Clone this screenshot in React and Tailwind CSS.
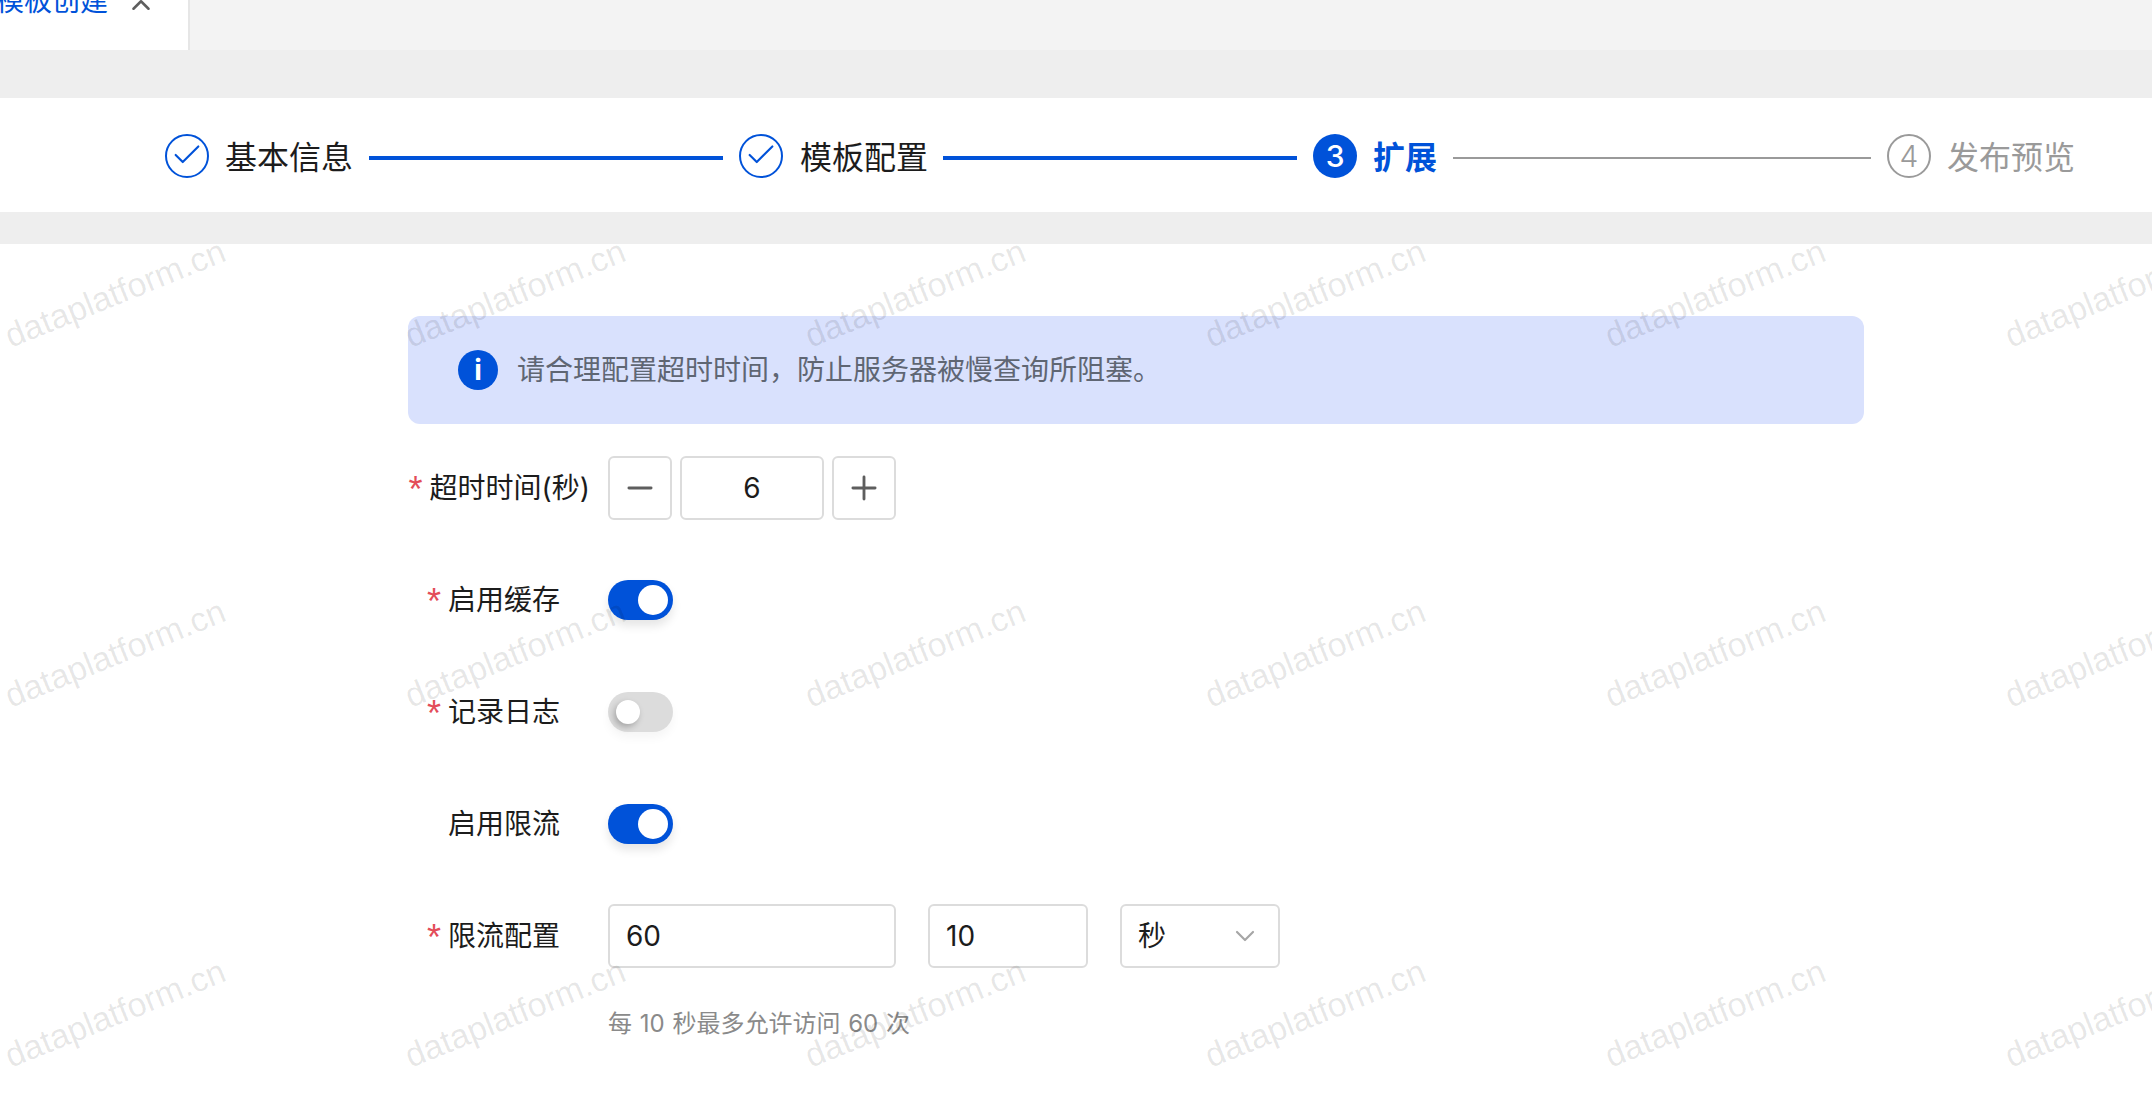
import { Check, ChevronDown, ChevronUp, Minus, Plus } from 'lucide-react'

const cjk = "font-['Inter','Noto_Sans_CJK_SC',sans-serif]"

function StepCircle({ status, number }) {
  if (status === 'done') {
    return (
      <span className="-mt-[2px] flex h-[44px] w-[44px] shrink-0 items-center justify-center rounded-full border-2 border-[#0052d9] text-[#0052d9]">
        <Check className="-mt-[2px] h-[34px] w-[34px]" strokeWidth={1.5} />
      </span>
    )
  }
  if (status === 'active') {
    return (
      <span className="-mt-[2px] flex h-[44px] w-[44px] shrink-0 items-center justify-center rounded-full bg-[#0052d9] text-[30px] font-medium text-white">
        {number}
      </span>
    )
  }
  return (
    <span className="-mt-[2px] flex h-[44px] w-[44px] shrink-0 items-center justify-center rounded-full border-2 border-[#9a9a9a] text-[30px] font-light text-[#9a9a9a]">
      {number}
    </span>
  )
}

function Steps() {
  return (
    <div className="flex h-[114px] items-center bg-white pl-[165px] pt-[4px]">
      <StepCircle status="done" />
      <span className="ml-[16px] mt-[2px] text-[32px] leading-[44px] text-[#1c1c1c]">基本信息</span>
      <div className="ml-[16px] mt-[2px] h-[4px] w-[354px] bg-[#0052d9]" />
      <div className="ml-[16px]">
        <StepCircle status="done" />
      </div>
      <span className="ml-[17px] mt-[2px] text-[32px] leading-[44px] text-[#1c1c1c]">模板配置</span>
      <div className="ml-[15px] mt-[2px] h-[4px] w-[354px] bg-[#0052d9]" />
      <div className="ml-[16px]">
        <StepCircle status="active" number={3} />
      </div>
      <span className="ml-[16px] mt-[2px] text-[32px] font-bold leading-[44px] text-[#0052d9]">扩展</span>
      <div className="ml-[16px] mt-[2px] h-[2px] w-[418px] bg-[#9a9a9a]" />
      <div className="ml-[16px]">
        <StepCircle status="todo" number={4} />
      </div>
      <span className="ml-[16px] mt-[2px] text-[32px] leading-[44px] text-[#9a9a9a]">发布预览</span>
    </div>
  )
}

function Row({ label, required, pad = 'pr-[48px]', className = '', children }) {
  return (
    <div className={`flex items-center ${className}`}>
      <label className={`flex w-[200px] shrink-0 items-center justify-end text-[28px] leading-[40px] text-[#1c1c1c] ${pad}`}>
        {required && <span className="mr-[7px] translate-y-[2px] font-['Liberation_Sans',sans-serif] text-[36px] leading-[40px] text-[#e34d59]">*</span>}
        {label}
      </label>
      {children}
    </div>
  )
}

function Toggle({ on }) {
  if (on) {
    return (
      <span className="flex h-[40px] w-[65px] items-center justify-end rounded-full bg-[#0052d9] pr-[5px] shadow-[0_6px_10px_rgba(0,0,0,0.1)]">
        <span className="h-[30px] w-[30px] rounded-full bg-white" />
      </span>
    )
  }
  return (
    <span className="flex h-[40px] w-[65px] items-center rounded-full bg-[#dcdcdc] pl-[8px] shadow-[0_6px_10px_rgba(0,0,0,0.04)]">
      <span className="h-[24px] w-[24px] rounded-full bg-white shadow-[-2px_3px_6px_rgba(0,0,0,0.25)]" />
    </span>
  )
}

function Field({ className = '', children }) {
  return (
    <div className={`flex h-[64px] items-center rounded-[6px] border-2 border-[#dcdcdc] bg-white text-[28px] text-[#1c1c1c] ${className}`}>
      {children}
    </div>
  )
}

function Watermarks() {
  const rows = [0, 1, 2]
  const cols = [0, 1, 2, 3, 4, 5]
  return (
    <div className="pointer-events-none absolute left-0 top-[243px] grid grid-cols-[repeat(6,400px)] grid-rows-[repeat(3,360px)]">
      {rows.map((r) =>
        cols.map((c) => (
          <div key={`${r}-${c}`} className="flex h-[100px] w-[231px] items-center justify-center">
            <span className="-rotate-[22deg] whitespace-nowrap font-['Liberation_Sans',sans-serif] text-[34px] text-black/10">
              dataplatform.cn
            </span>
          </div>
        ))
      )}
    </div>
  )
}

export default function App() {
  return (
    <div className={`relative h-[1102px] w-[2152px] overflow-hidden bg-white ${cjk}`}>
      <div className="flex h-[50px] overflow-hidden bg-[#f3f3f3]">
        <div className="flex h-[50px] w-[190px] items-start border-r-2 border-[#e6e6e6] bg-white">
          <span className="-ml-[4px] -mt-[19px] whitespace-nowrap text-[28px] leading-[40px] text-[#0052d9]">模板创建</span>
          <ChevronUp className="-mt-[10px] ml-[18px] h-[30px] w-[30px] text-[#5e5e5e]" strokeWidth={2} />
        </div>
      </div>
      <div className="h-[48px] bg-[#eeeeee]" />
      <Steps />
      <div className="h-[32px] bg-[#eeeeee]" />

      <div className="pl-[408px] pt-[72px]">
        <div className="flex h-[108px] w-[1456px] items-center rounded-[12px] bg-[#d9e1fd] pl-[50px]">
          <span className="flex h-[40px] w-[40px] items-center justify-center rounded-full bg-[#0052d9] text-[28px] font-bold text-white">i</span>
          <span className="ml-[19px] text-[28px] text-[#5f6673]">请合理配置超时时间，防止服务器被慢查询所阻塞。</span>
        </div>

        <Row label="超时时间(秒)" required pad="pr-[18px]" className="mt-[32px]">
          <div className="flex gap-[8px]">
            <Field className="w-[64px] justify-center text-[#5e5e5e]">
              <Minus className="h-[38px] w-[38px]" strokeWidth={1.8} />
            </Field>
            <Field className="w-[144px] justify-center">6</Field>
            <Field className="w-[64px] justify-center text-[#5e5e5e]">
              <Plus className="h-[38px] w-[38px]" strokeWidth={1.8} />
            </Field>
          </div>
        </Row>

        <Row label="启用缓存" required className="mt-[60px]">
          <Toggle on />
        </Row>
        <Row label="记录日志" required className="mt-[72px]">
          <Toggle />
        </Row>
        <Row label="启用限流" className="mt-[72px]">
          <Toggle on />
        </Row>

        <Row label="限流配置" required className="mt-[60px]">
          <div className="flex gap-[32px]">
            <Field className="w-[288px] pl-[16px]">60</Field>
            <Field className="w-[160px] pl-[16px]">10</Field>
            <Field className="w-[160px] justify-between pl-[16px] pr-[17px]">
              秒
              <ChevronDown className="h-[32px] w-[32px] text-[#a6a6a6]" strokeWidth={1.6} />
            </Field>
          </div>
        </Row>

        <p className="mt-[38px] pl-[200px] text-[24px] leading-[36px] text-[#8a8a8a] [word-spacing:1px]">每 10 秒最多允许访问 60 次</p>
      </div>

      <Watermarks />
    </div>
  )
}
